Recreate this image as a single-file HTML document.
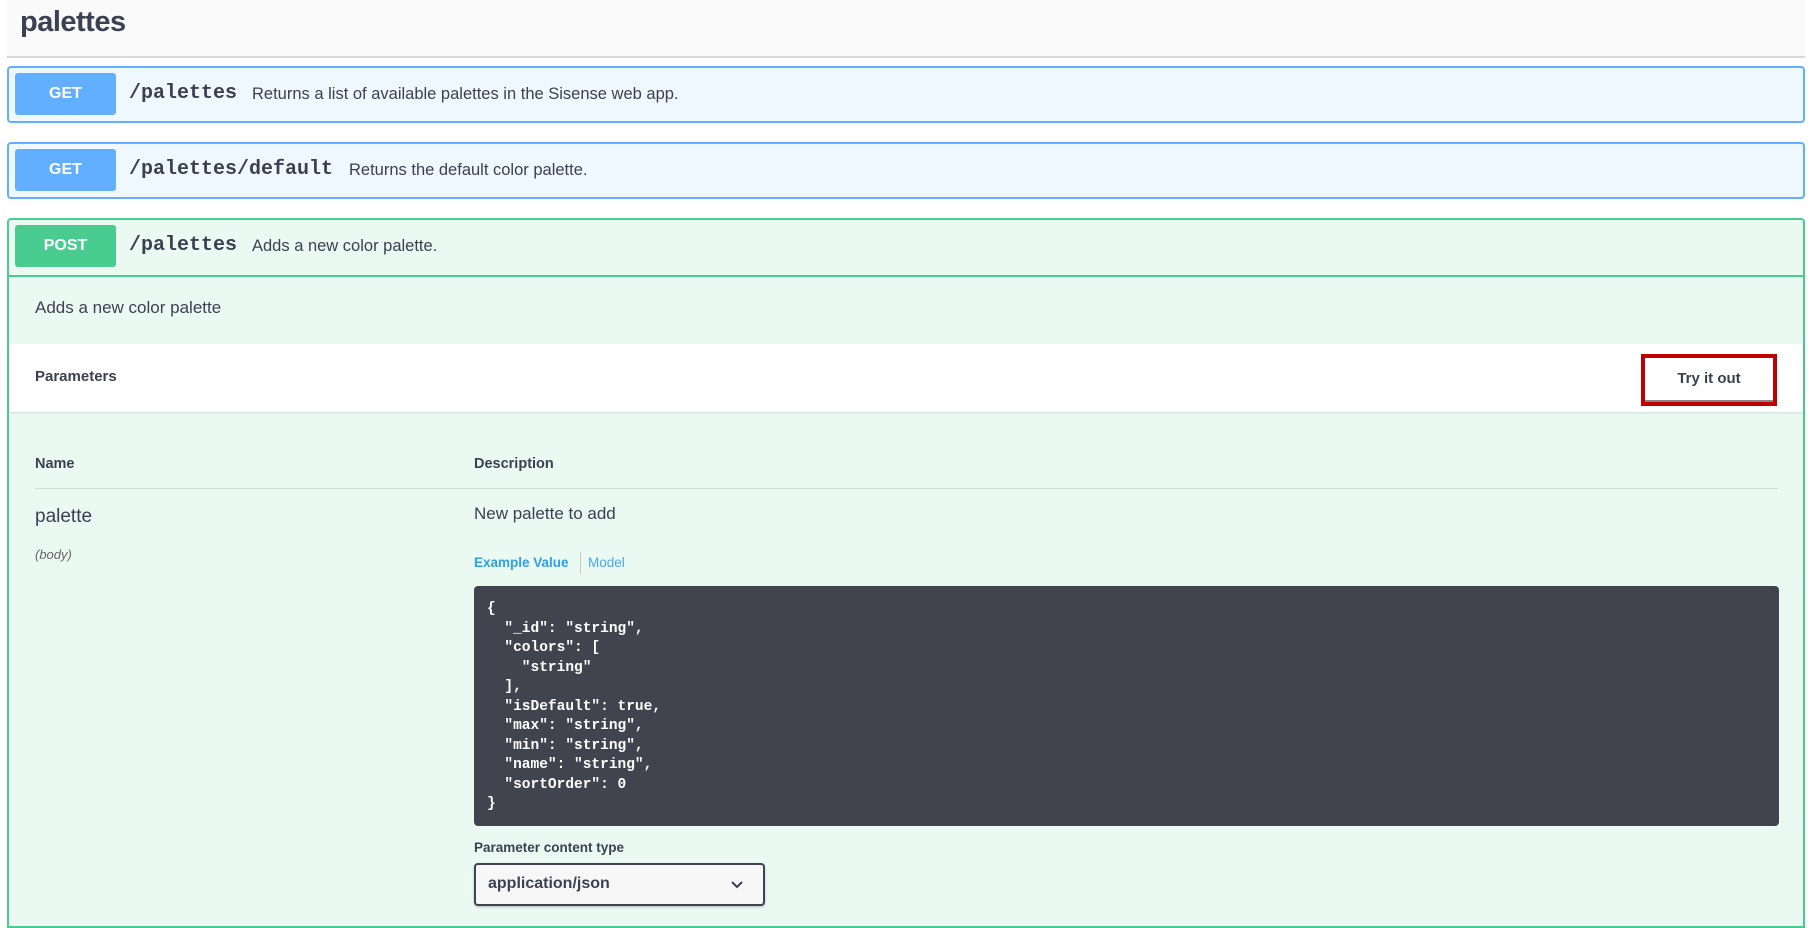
<!DOCTYPE html>
<html><head><meta charset="utf-8"><style>
*{box-sizing:border-box;margin:0;padding:0}
body{width:1808px;height:918px;overflow:hidden;background:#fff;font-family:"Liberation Sans",sans-serif;color:#3b4151;position:relative}
.abs{position:absolute}
.title{left:7px;top:0;width:1798px;height:58px;background:#fafafa;border-bottom:2px solid #d8d8d8}
.title span{position:absolute;left:13px;top:6px;font-size:29px;font-weight:bold;letter-spacing:-0.5px}
.op{left:7px;width:1798px;border:2px solid #61affe;background:#eff7ff;border-radius:4px}
.badge{position:absolute;left:6px;width:101px;height:42px;border-radius:3px;background:#61affe;color:#fff;font-weight:bold;font-size:16px;text-align:center;line-height:42px}
.path{position:absolute;left:120px;font-family:"Liberation Mono",monospace;font-weight:bold;font-size:20px;line-height:42px}
.desc{position:absolute;font-size:16.5px;line-height:42px}
.post{border-color:#49cc90;background:#ebf9f3;height:710px;top:218px;border-radius:4px 4px 0 0}
.mono{font-family:"Liberation Mono",monospace}
</style></head><body>
<div class="abs title"><span>palettes</span></div>

<div class="abs op" style="top:66px;height:57px">
 <div class="badge" style="top:5px">GET</div>
 <div class="path" style="top:5px">/palettes</div>
 <div class="desc" style="left:243px;top:5px">Returns a list of available palettes in the Sisense web app.</div>
</div>
<div class="abs op" style="top:142px;height:57px">
 <div class="badge" style="top:5px">GET</div>
 <div class="path" style="top:5px">/palettes/default</div>
 <div class="desc" style="left:340px;top:5px">Returns the default color palette.</div>
</div>
<div class="abs op post">
 <div class="badge" style="top:5px;background:#49cc90">POST</div>
 <div class="path" style="top:5px">/palettes</div>
 <div class="desc" style="left:243px;top:5px">Adds a new color palette.</div>
 <div class="abs" style="left:0;top:55px;width:1794px;border-top:2px solid #49cc90"></div>
 <div class="abs" style="left:26px;top:78px;font-size:17px">Adds a new color palette</div>
 <div class="abs" style="left:0;top:124px;width:1794px;height:68px;background:#fff;box-shadow:0 1px 2px rgba(0,0,0,.12)">
  <div class="abs" style="left:26px;top:24px;font-size:15px;font-weight:bold">Parameters</div>
  <div class="abs" style="left:1632px;top:10px;width:136px;height:52px;border:4px solid #c00000">
   <div style="width:100%;height:100%;border-bottom:2px solid #888;text-align:center;line-height:42px;font-size:15px;font-weight:bold">Try it out</div>
  </div>
 </div>
 <div class="abs" style="left:26px;top:236px;font-size:14.5px;font-weight:bold">Name</div>
 <div class="abs" style="left:465px;top:236px;font-size:14.5px;font-weight:bold">Description</div>
 <div class="abs" style="left:26px;top:268px;width:1743px;border-top:1px solid #cfdcd6"></div>
 <div class="abs" style="left:26px;top:286px;font-size:19px">palette</div>
 <div class="abs" style="left:26px;top:327px;font-size:13px;font-style:italic;color:#666">(body)</div>
 <div class="abs" style="left:465px;top:284px;font-size:17px">New palette to add</div>
 <div class="abs" style="left:465px;top:335px;font-size:13.5px;font-weight:bold;color:#2da0e6">Example Value</div>
 <div class="abs" style="left:571px;top:332px;height:22px;border-left:1px solid #c8c8c8"></div>
 <div class="abs" style="left:579px;top:335px;font-size:13.5px;color:#4aa8e8">Model</div>
 <div class="abs mono" style="left:465px;top:366px;width:1305px;height:240px;background:#41444e;border-radius:4px;color:#fff;font-weight:bold;font-size:14.5px;line-height:19.5px;padding:14px 0 0 13px;white-space:pre">{
  "_id": "string",
  "colors": [
    "string"
  ],
  "isDefault": true,
  "max": "string",
  "min": "string",
  "name": "string",
  "sortOrder": 0
}</div>
 <div class="abs" style="left:465px;top:620px;font-size:13.5px;font-weight:bold">Parameter content type</div>
 <div class="abs" style="left:465px;top:643px;width:291px;height:43px;border:2px solid #41444e;border-radius:4px;background:#f7f7f7;box-shadow:0 1px 2px rgba(0,0,0,.25)">
  <div class="abs" style="left:12px;top:10px;font-size:16px;font-weight:bold">application/json</div>
  <svg class="abs" style="left:254px;top:14px" width="14" height="12" viewBox="0 0 14 12"><path d="M2 3l5 5 5-5" fill="none" stroke="#3b4151" stroke-width="2"/></svg>
 </div>
</div>
</body></html>
